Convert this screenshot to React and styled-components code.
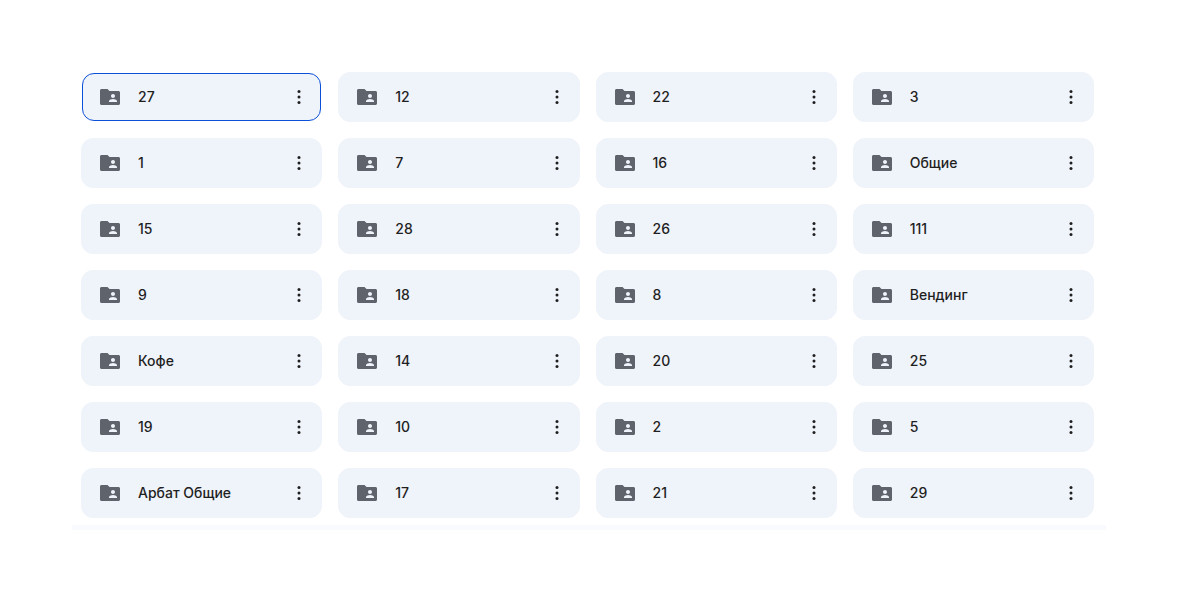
import React from 'react';
import styled, { createGlobalStyle } from 'styled-components';

const GlobalStyle = createGlobalStyle`
  body {
    margin: 0;
    background: #fff;
    color: #1f1f1f;
    font-family: Inter, "Liberation Sans", sans-serif;
  }
`;

export const Page = styled.main`
  padding: 72px 73px 72px 72px;
`;

export const Panel = styled.section`
  padding: 0 12px 7px 9px;
  border-bottom: 5px solid #f8fafd;
`;

export const Grid = styled.ul`
  display: grid;
  grid-template-columns: repeat(4, 1fr);
  gap: 16px;
  list-style-type: none;
  margin: 0;
  padding: 0;
`;

export const Card = styled.li`
  display: flex;
  align-items: center;
  box-sizing: border-box;
  min-height: ${props => props.$selected ? '48px' : '50px'};
  margin: ${props => props.$selected ? '1px' : '0'};
  padding: 0 ${props => props.$selected ? '9px 0 15px' : '10px 0 16px'};
  border: 1px solid ${props => props.$selected ? '#0b50d8' : '#eff3fa'};
  border-radius: 12px;
  background: #eff3fa;
`;

export const FolderLink = styled.a`
  display: flex;
  flex: 1;
  align-items: center;
  gap: 16px;
  color: inherit;
  font-size: 14px;
  font-weight: 500;
  line-height: 20px;
  text-decoration: none;
`;

export const MenuButton = styled.button`
  display: flex;
  padding: 0;
  border: 0;
  background: none;
  color: #1f1f1f;
  cursor: pointer;
`;

const FolderIcon = () => (
  <svg width="24" height="24" viewBox="0 0 24 24" fill="#5f636b" aria-hidden="true">
    <path d="M20.5 6H11.5l-2-2H3.5C2.7 4 2 4.7 2 5.5v13c0 .8.7 1.5 1.5 1.5h17c.8 0 1.5-.7 1.5-1.5v-11c0-.8-.7-1.5-1.5-1.5zM15 9c1.1 0 2 .9 2 2s-.9 2-2 2-2-.9-2-2 .9-2 2-2zm4 8h-8v-1c0-1.33 2.67-2 4-2s4 .67 4 2v1z" />
  </svg>
);

const MoreIcon = () => (
  <svg width="24" height="24" viewBox="0 0 24 24" fill="currentColor" aria-hidden="true">
    <circle cx="12" cy="6.5" r="1.5" />
    <circle cx="12" cy="12" r="1.5" />
    <circle cx="12" cy="17.5" r="1.5" />
  </svg>
);

const folders = [
  '27', '12', '22', '3',
  '1', '7', '16', 'Общие',
  '15', '28', '26', '111',
  '9', '18', '8', 'Вендинг',
  'Кофе', '14', '20', '25',
  '19', '10', '2', '5',
  'Арбат Общие', '17', '21', '29'
];

const App = () => {
  const list = folders.map(name => (
    <Card key={name} $selected={name === '27'}>
      <FolderLink href={`#${name}`}>
        <FolderIcon />
        {name}
      </FolderLink>
      <MenuButton type="button" aria-label={`Действия: ${name}`}>
        <MoreIcon />
      </MenuButton>
    </Card>
  ));

  return (
    <Page>
      <GlobalStyle />
      <Panel>
        <Grid>
          {list}
        </Grid>
      </Panel>
    </Page>
  );
};

export default App;
